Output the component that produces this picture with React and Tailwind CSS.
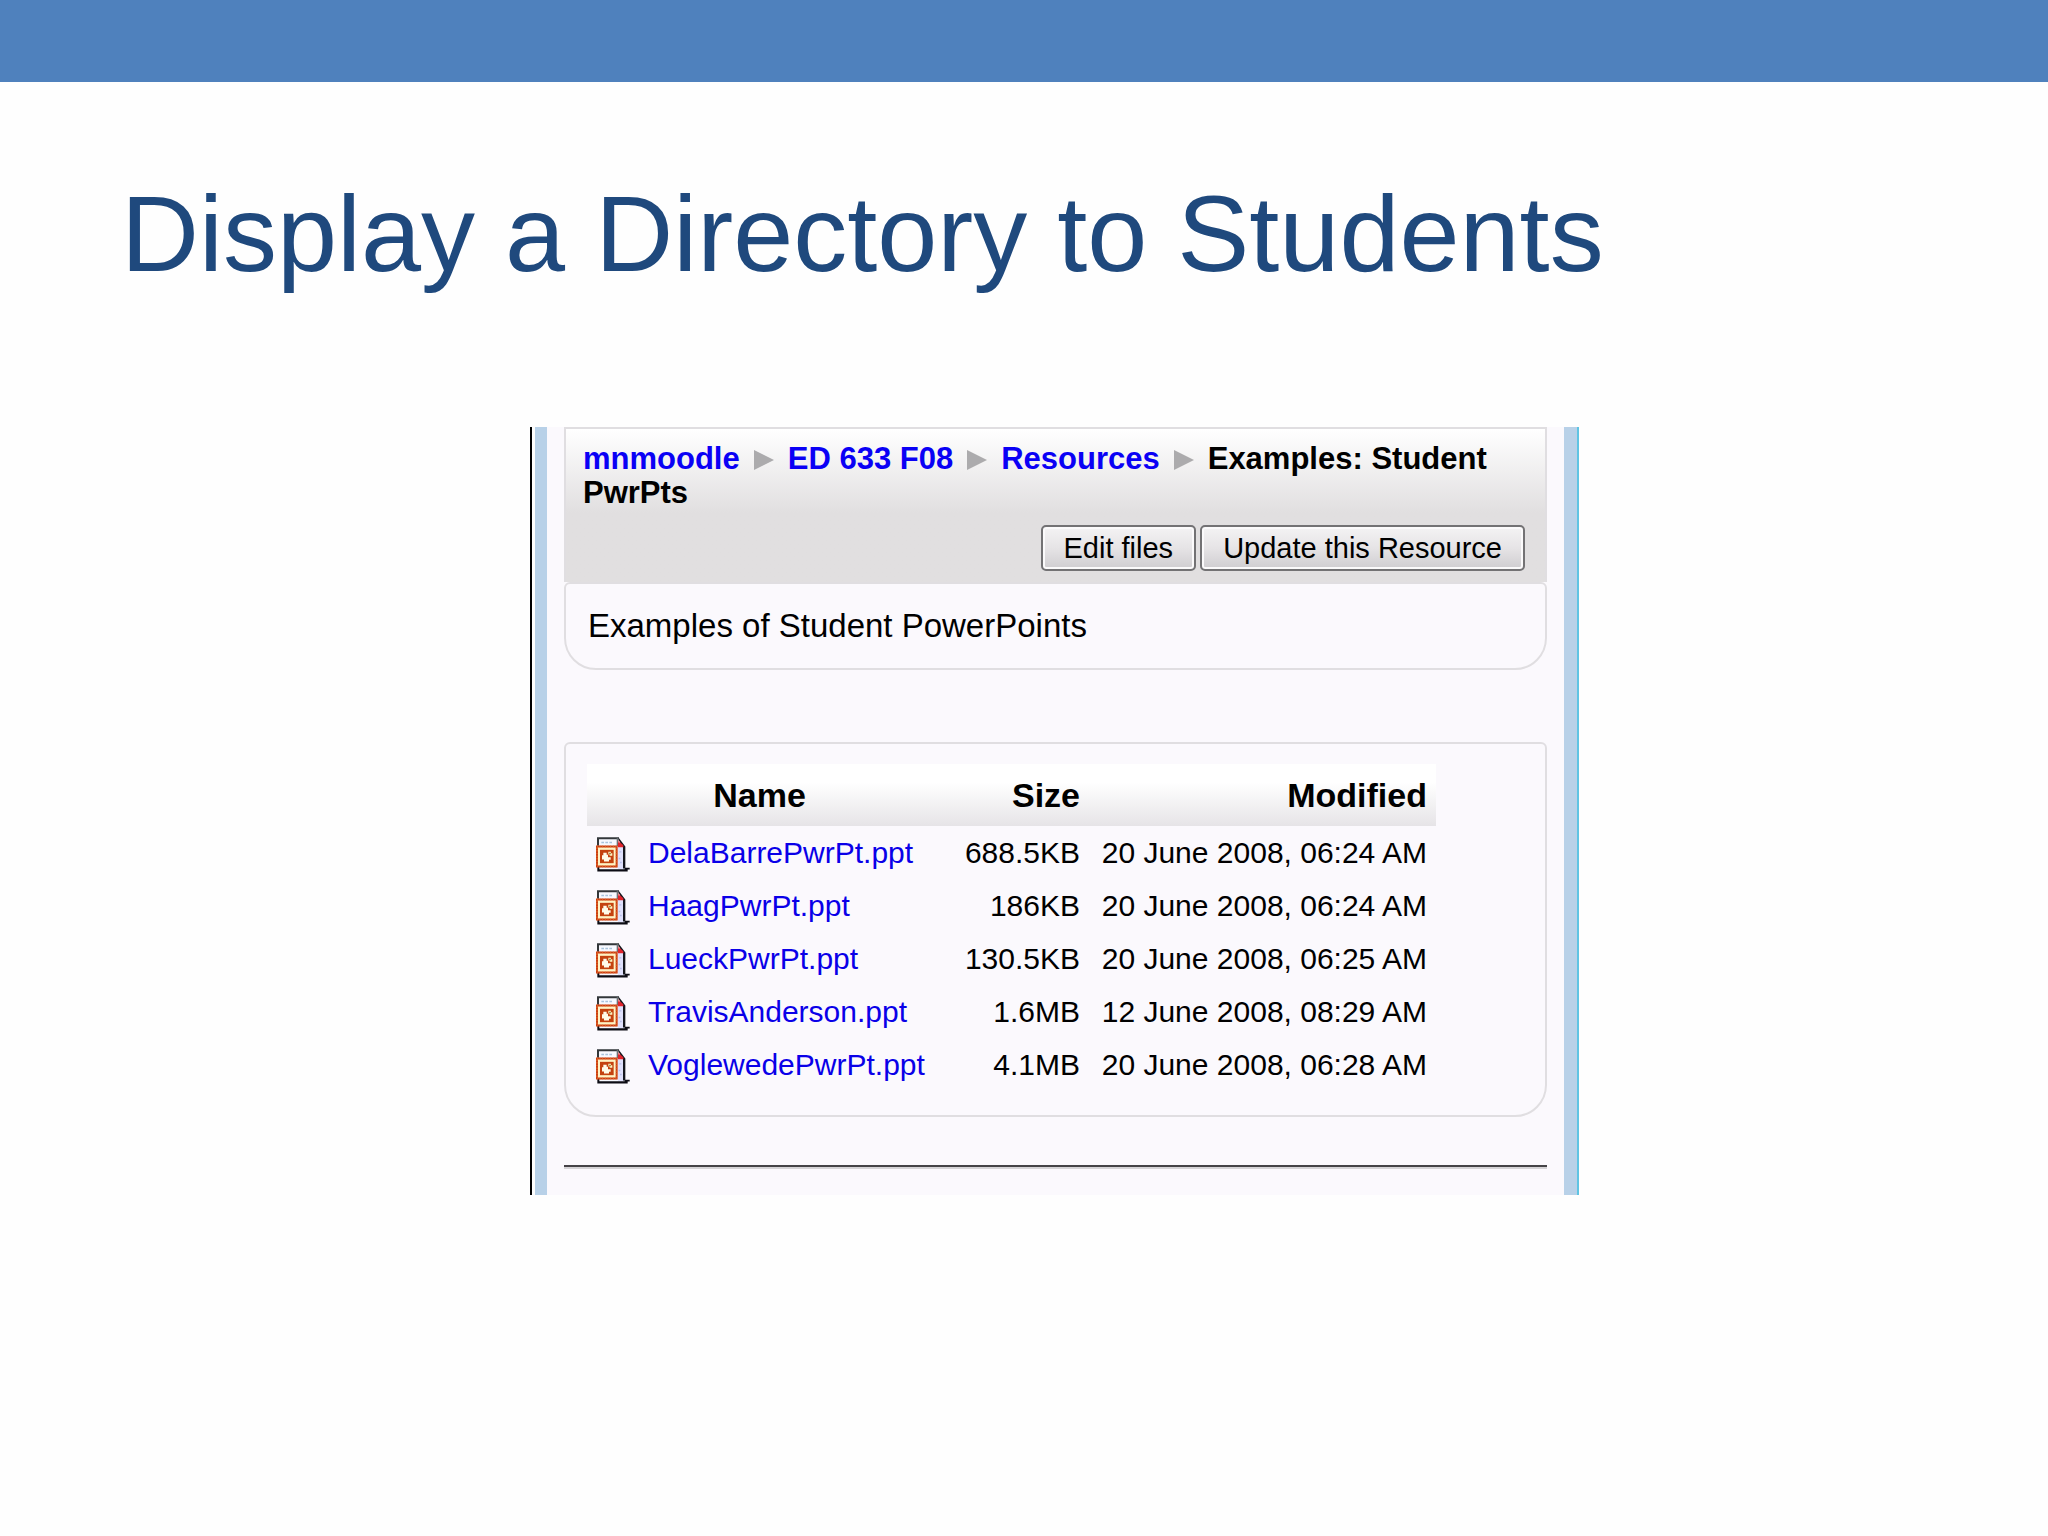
import React from 'react';

const files = [
  { name: 'DelaBarrePwrPt.ppt', size: '688.5KB', modified: '20 June 2008, 06:24 AM' },
  { name: 'HaagPwrPt.ppt', size: '186KB', modified: '20 June 2008, 06:24 AM' },
  { name: 'LueckPwrPt.ppt', size: '130.5KB', modified: '20 June 2008, 06:25 AM' },
  { name: 'TravisAnderson.ppt', size: '1.6MB', modified: '12 June 2008, 08:29 AM' },
  { name: 'VoglewedePwrPt.ppt', size: '4.1MB', modified: '20 June 2008, 06:28 AM' },
];

const crumbs = ['mnmoodle', 'ED 633 F08', 'Resources'];

function PptIcon() {
  return (
    <svg viewBox="0 0 102 104" className="block w-[34px] h-[35px]" aria-hidden="true">
      <path d="M6 2h62l18 24v72H6z" fill="#f7f9ff" />
      <path d="M66 28h18v68H66z" fill="#dfe0fb" />
      <path d="M3 0h66v6H9v20H3z" fill="#33373a" />
      <path d="M62 3h6v24h-6z" fill="#6d7478" />
      <path d="M68 2l20 26v66h-7V30l-13-20z" fill="#15161c" />
      <path d="M66 10l16 14v6H66z" fill="#e0242c" />
      <path d="M67 8l6 8h-6z" fill="#f3a3a5" />
      <path d="M16 14h8v4h-8zM28 14h8v4h-8zM40 14h8v4h-8z" fill="#a9c3dc" />
      <path d="M70 42h6v4h-6zM68 62h5v4h-5zM72 74h5v4h-5z" fill="#b7bde8" />
      <path d="M4 88h6v8h76v-4h15v5h-6v6H4z" fill="#0c0c14" />
      <rect x="3" y="28" width="59" height="60" fill="#fff3c4" stroke="#cc3d12" strokeWidth="6" />
      <rect x="3" y="28" width="59" height="60" fill="none" stroke="#e2762f" strokeWidth="6" strokeDasharray="2 6" />
      <rect x="12" y="38" width="41" height="40" fill="#c4420f" />
      <path d="M22 47h10v6h4v7h8v8h-5v5H24v-6h-6V54h4z" fill="#fffbe9" />
      <path d="M37 44h8v4h4v8h-8v-4h-4z" fill="#fff3c4" />
      <path d="M40 47h4v4h-4z" fill="#7d5a10" />
    </svg>
  );
}

function Arrow() {
  return (
    <svg viewBox="0 0 20 20" className="inline-block w-5 h-5 mx-[14px] align-[-1px]" aria-hidden="true">
      <path d="M0 0l20 10L0 20z" fill="#acabad" />
    </svg>
  );
}

function GrayButton({ children }) {
  return (
    <button
      type="button"
      className="h-[46px] px-[21px] rounded-[5px] border-2 border-[#737274] bg-linear-to-b from-[#f4f3f4] from-0% via-[#e6e4e6] via-50% to-[#cfcdd0] to-100% shadow-[inset_0_0_0_2px_#fbfafb] text-[29px] leading-8 text-black whitespace-nowrap"
    >
      {children}
    </button>
  );
}

function NavBar() {
  return (
    <header className="border-2 border-b-0 border-[#e0dee1] bg-linear-to-b from-white from-0% via-[#e1dfe0] via-[84px] to-[#e1dfe0] to-100% pl-[17px] pr-5 pt-[13px] pb-[11px]">
      <nav aria-label="Breadcrumb" className="text-[31px] leading-[34px] font-bold text-black">
        {crumbs.map((c) => (
          <React.Fragment key={c}>
            <a href="#" className="text-[#0a00f5]">{c}</a>
            <Arrow />
          </React.Fragment>
        ))}
        <span>Examples: Student PwrPts</span>
      </nav>
      <div className="flex justify-end gap-1 mt-[15px]">
        <GrayButton>Edit files</GrayButton>
        <GrayButton>Update this Resource</GrayButton>
      </div>
    </header>
  );
}

function FileTable() {
  return (
    <table className="w-[849px] max-w-full border-collapse text-black">
      <thead>
        <tr className="h-[62px] bg-linear-to-b from-white from-30% to-[#e6e4e7] text-[34px] leading-10 font-bold">
          <th colSpan={2} className="text-center">Name</th>
          <th className="text-right pr-2">Size</th>
          <th className="text-right pr-[9px]">Modified</th>
        </tr>
      </thead>
      <tbody className="text-[30px] leading-10">
        {files.map((f) => (
          <tr key={f.name} className="h-[53px]">
            <td className="w-[61px] pl-[9px] pt-1"><PptIcon /></td>
            <td className="w-[284px]">
              <a href="#" className="text-[#0a00e8]">{f.name}</a>
            </td>
            <td className="w-[156px] pr-2 text-right">{f.size}</td>
            <td className="pr-[9px] text-right whitespace-nowrap">{f.modified}</td>
          </tr>
        ))}
      </tbody>
    </table>
  );
}

export default function App() {
  return (
    <div className="min-h-screen bg-[#fefefe] font-['Liberation_Sans',Arial,sans-serif]">
      <div className="h-[82px] bg-[#4f81bd]" />
      <h1 className="pl-[121px] pt-[90px] text-[108px] leading-[124px] text-[#1f497d]">
        Display a Directory to Students
      </h1>

      <main className="flex justify-center pl-[61px] pt-[131px] pb-20">
        <div className="w-full max-w-[1049px] border-l-2 border-l-black border-r-2 border-r-[#5fc4e3] pl-[3px]">
          <div className="border-l-12 border-r-13 border-[#b8d1e8] bg-[#fbf9fd] px-[17px] pb-[26px]">
            <NavBar />
            <section className="h-[88px] border-2 border-[#e0dee1] rounded-t-md rounded-b-[32px] px-[22px] flex items-center text-[33px] leading-10 text-black">
              Examples of Student PowerPoints
            </section>

            <section className="mt-[72px] border-2 border-[#e0dee1] rounded-t-md rounded-b-[32px] px-[21px] pt-5 pb-6">
              <FileTable />
            </section>

            <hr className="mt-12 border-t-2 border-b-2 border-t-[#454347] border-b-[#d6d4d7]" />
          </div>
        </div>
      </main>
    </div>
  );
}
